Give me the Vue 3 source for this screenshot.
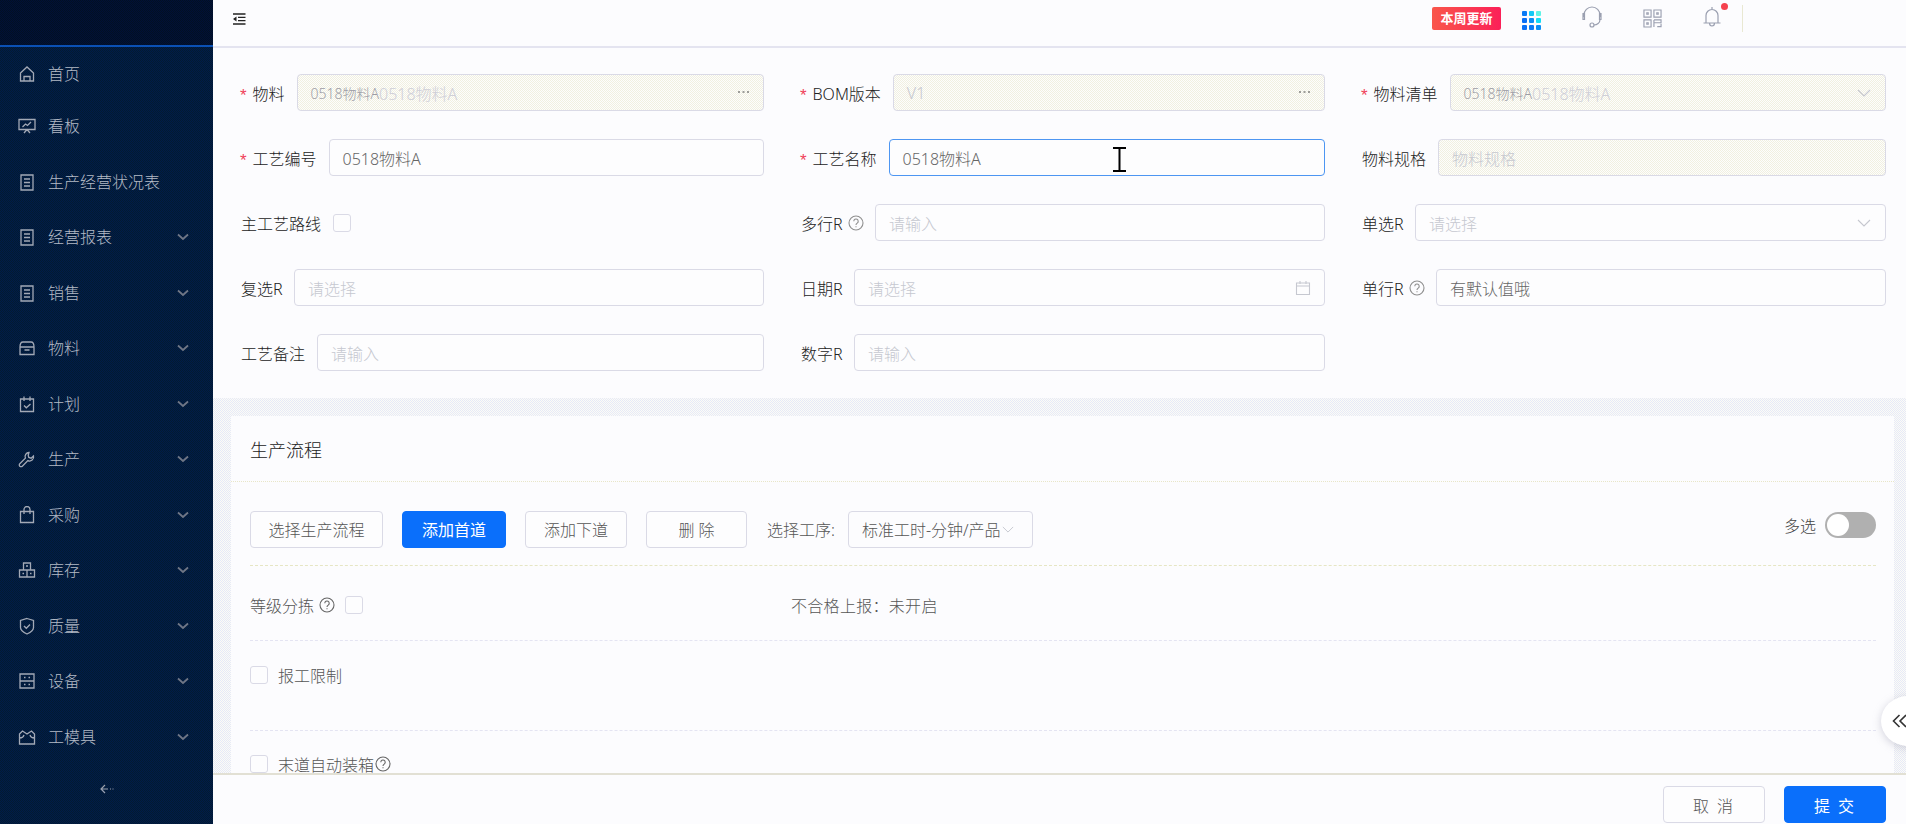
<script setup>
const menu = [
  { t: '首页', i: 'home' }, { t: '看板', i: 'board' }, { t: '生产经营状况表', i: 'doc' },
  { t: '经营报表', i: 'doc', c: 1 }, { t: '销售', i: 'doc', c: 1 }, { t: '物料', i: 'box', c: 1 },
  { t: '计划', i: 'plan', c: 1 }, { t: '生产', i: 'wrench', c: 1 }, { t: '采购', i: 'bag', c: 1 },
  { t: '库存', i: 'stock', c: 1 }, { t: '质量', i: 'shield', c: 1 }, { t: '设备', i: 'device', c: 1 },
  { t: '工模具', i: 'tool', c: 1 },
]
const icons = {
  home: 'M2.500 8 9 2l6.500 6v8h-13zM6 16v-4.500h6V16',
  board: 'M1 2.500h16v10H1zM4.500 10l3-3 2 1.500 3.500-3.500M6 16l3-3.500 3 3.500',
  doc: 'M3 2h12v15H3zM6 6h6M6 9.500h6M6 13h6',
  box: 'M2 8c0-3 1-5 3-5h8c2 0 3 2 3 5v7.500H2zM2 8h14M6.500 11h5',
  plan: 'M2.500 4h13v12.500h-13zM6 1.500V6M12 1.500V6M6 10.500l2.300 2.300L12.500 9',
  wrench: 'M11 2.500a4 4 0 0 0-3.600 5.600L1.800 13.700a1.700 1.700 0 0 0 2.500 2.500l5.600-5.600A4 4 0 0 0 15.500 6l-2.400 2.200-2.300-.8-.6-2.200z',
  bag: 'M2.500 5.500h13v11h-13zM6 8V3.500a3 3 0 0 1 6 0V8',
  stock: 'M5.500 2h7v7h-7zM1.500 9h7.500v7h-7.500zM9 9h7.500v7H9zM8 5h2M4.500 12.500h1.500M12 12.500h1.500',
  shield: 'M9 1.500l6.500 2v7c0 3-3 5-6.500 6.500-3.500-1.500-6.500-3.500-6.500-6.500v-7zM6 9l2.300 2.300L12 7.500',
  device: 'M2 2h14v14H2zM2 9h14M6 5.500h1.500M10.500 5.500H12M6 12.500h1.500M10.500 12.500H12',
  tool: 'M1.500 6l3-3 4.500 3 4.500-3 3 3v10h-15zM1.500 10c3 0 4-1 4.500-3M16.500 10c-3 0-4-1-4.500-3',
}
const dots = [
  ['#0a7af5', '#14c8f5', '#5ff3e6'], ['#0a6ff5', '#0a8ef5', '#14dcf5'], ['#0a6ff5', '#0a7af5', '#0a8ef5'],
]
</script>

<template>
  <div class="page">
    <aside class="side">
      <div class="logo"></div>
      <nav class="nav">
        <div v-for="m in menu" :key="m.t" class="item">
          <svg class="ico" viewBox="0 0 18 18"><path :d="icons[m.i]" /></svg>
          <span class="item-t">{{ m.t }}</span>
          <svg v-if="m.c" class="chev" viewBox="0 0 12 8"><path d="M1 1.500 6 6l5-4.500" /></svg>
        </div>
      </nav>
      <div class="side-foot">
        <svg viewBox="0 0 14 10" class="back"><path d="M5 1 1 5l4 4M1 5h7M10 5h1M12.500 5h1" /></svg>
      </div>
    </aside>

    <main class="main">
      <header class="top">
        <svg class="burger" viewBox="0 0 13 12"><path d="M0 1h12.500M5 4.300h7.500M5 7.600h7.500M0 11h12.500" /><path class="fill" d="M3.500 3.500v5L0 6z" /></svg>
        <div class="top-right">
          <span class="badge">本周更新</span>
          <div class="dots">
            <template v-for="(row, r) in dots" :key="r">
              <i v-for="(c, k) in row" :key="k" :style="{ background: c }"></i>
            </template>
          </div>
          <svg class="tico head" viewBox="0 0 22 22"><path d="M3 11V9a8 8 0 0 1 16 0v2M18.500 7.500h1.500v6h-1.500zM3.500 7.500H2v6h1.500zM19 13.500c0 3.500-3 5.500-6 5.500" /><circle cx="11" cy="19" r="2" /></svg>
          <svg class="tico qr" viewBox="0 0 20 20"><path d="M1 1h7.500v7.500H1zM11.500 1H19v7.500h-7.500zM1 11.500h7.500V19H1zM4 4h1.500v1.500H4zM14.500 4H16v1.500h-1.500zM4 14.500h1.500V16H4zM11.500 11.500H19v3h-7.500M11.500 11.500V19M15 18.500h4v-3" /></svg>
          <span class="bell-w">
            <svg class="tico bell" viewBox="0 0 18 22"><path d="M9 1v2.500M3 17V9.500a6 6 0 0 1 12 0V17M.5 17h17M6.500 17a2.500 3 0 0 0 5 0" /></svg>
            <b class="red"></b>
          </span>
          <span class="sep"></span>
        </div>
      </header>

      <div class="content">
        <section class="form">
          <div class="field"><label><em>*</em>物料</label><div class="ctl off"><span class="small">0518物料A</span><span class="ph2">0518物料A</span><svg class="more" viewBox="0 0 11 3"><path d="M0 1h2M4.500 1h2M9 1h2" /></svg></div></div>
          <div class="field"><label><em>*</em>BOM版本</label><div class="ctl off"><span class="ph">V1</span><svg class="more" viewBox="0 0 11 3"><path d="M0 1h2M4.500 1h2M9 1h2" /></svg></div></div>
          <div class="field"><label><em>*</em>物料清单</label><div class="ctl off"><span class="small">0518物料A</span><span class="ph2">0518物料A</span><svg class="arrow" viewBox="0 0 14 8"><path d="M1 1l6 6 6-6" /></svg></div></div>

          <div class="field"><label><em>*</em>工艺编号</label><div class="ctl"><span class="val">0518物料A</span></div></div>
          <div class="field"><label><em>*</em>工艺名称</label><div class="ctl focus"><span class="val">0518物料A</span></div></div>
          <div class="field"><label>物料规格</label><div class="ctl off"><span class="ph">物料规格</span></div></div>

          <div class="field"><label>主工艺路线</label><span class="check"></span></div>
          <div class="field"><label class="r">多行R<svg class="q" viewBox="0 0 16 16"><circle cx="8" cy="8" r="7" /><path d="M5.800 6.200a2.200 2.200 0 1 1 3.400 1.900c-.8.500-1.200 1-1.200 1.900M8 11.300v1" /></svg></label><div class="ctl"><span class="ph">请输入</span></div></div>
          <div class="field"><label class="r">单选R</label><div class="ctl"><span class="ph">请选择</span><svg class="arrow" viewBox="0 0 14 8"><path d="M1 1l6 6 6-6" /></svg></div></div>

          <div class="field"><label class="r">复选R</label><div class="ctl"><span class="ph">请选择</span></div></div>
          <div class="field"><label class="r">日期R</label><div class="ctl"><span class="ph">请选择</span><svg class="cal" viewBox="0 0 16 16"><path d="M1.500 3h13v11.500h-13zM1.500 6h13M5 1v3M11 1v3" /></svg></div></div>
          <div class="field"><label class="r">单行R<svg class="q" viewBox="0 0 16 16"><circle cx="8" cy="8" r="7" /><path d="M5.800 6.200a2.200 2.200 0 1 1 3.400 1.900c-.8.500-1.200 1-1.200 1.900M8 11.300v1" /></svg></label><div class="ctl"><span class="val">有默认值哦</span></div></div>

          <div class="field"><label>工艺备注</label><div class="ctl"><span class="ph">请输入</span></div></div>
          <div class="field"><label class="r">数字R</label><div class="ctl"><span class="ph">请输入</span></div></div>
        </section>

        <section class="band">
          <div class="card">
            <h3 class="title">生产流程</h3>
            <div class="tools">
              <button class="btn w1">选择生产流程</button>
              <button class="btn w2 pri">添加首道</button>
              <button class="btn w3">添加下道</button>
              <button class="btn w4">删 除</button>
              <span class="tl">选择工序:</span>
              <div class="sel">标准工时-分钟/产品<svg class="arrow sm" viewBox="0 0 14 8"><path d="M1 1l6 6 6-6" /></svg></div>
              <div class="multi">
                <span>多选</span>
                <span class="switch"><i></i></span>
              </div>
            </div>
            <div class="row r1">
              <span class="cell">等级分拣<svg class="q dark" viewBox="0 0 16 16"><circle cx="8" cy="8" r="7" /><path d="M5.800 6.200a2.200 2.200 0 1 1 3.400 1.900c-.8.500-1.200 1-1.200 1.900M8 11.300v1" /></svg><span class="check"></span></span>
              <span class="state">不合格上报：未开启</span>
            </div>
            <div class="row r2">
              <span class="cell"><span class="check"></span>报工限制</span>
            </div>
            <div class="row r3">
              <span class="cell"><span class="check"></span>末道自动装箱<svg class="q dark tight" viewBox="0 0 16 16"><circle cx="8" cy="8" r="7" /><path d="M5.800 6.200a2.200 2.200 0 1 1 3.400 1.900c-.8.500-1.200 1-1.200 1.900M8 11.300v1" /></svg></span>
            </div>
          </div>
        </section>
      </div>

      <footer class="foot">
        <button class="fbtn">取 消</button>
        <button class="fbtn blue">提 交</button>
      </footer>

      <div class="float">
        <svg viewBox="0 0 16 14"><path d="M7.500 1 1.500 7l6 6M14 1 8 7l6 6" /></svg>
      </div>
      <svg class="cursor" viewBox="0 0 15 25"><path d="M1 1h13M1 24h13M7.500 1v23" /></svg>
    </main>
  </div>
</template>

<style>
html, body { margin: 0; padding: 0; overflow: hidden; }
</style>

<style scoped>
.page {
  display: flex;
  width: 1906px;
  height: 824px;
  overflow: hidden;
  font-family: "Noto Sans", "Noto Sans CJK SC", sans-serif;
  font-size: 16px;
  font-weight: 300;
  color: #333;
  background: #fcfcfe;
}
.side {
  width: 213px;
  flex: none;
  display: flex;
  flex-direction: column;
  background: repeating-conic-gradient(#001c4a 0 25%, #031a30 0 50%) 0 0 / 2px 2px;
  color: #b4bac6;
}
.logo {
  height: 45px;
  flex: none;
  background: repeating-conic-gradient(#001038 0 25%, #021022 0 50%) 0 0 / 2px 2px;
  border-bottom: 2px solid #0a50b4;
}
.nav { flex: 1; padding-top: 1px; }
.item { height: 55.500px; display: flex; align-items: center; padding-left: 18px; }
.item:first-child { height: 50.500px; box-sizing: border-box; padding-top: 2px; }
.ico { width: 18px; height: 18px; flex: none; fill: none; stroke: #a3a9b6; stroke-width: 1.300; }
.item-t { margin-left: 12px; line-height: 1; }
.chev { width: 12px; height: 8px; margin-left: auto; margin-right: 24px; fill: none; stroke: #6f7686; stroke-width: 1.800; }
.side-foot { height: 40px; display: flex; justify-content: center; padding-top: 1px; }
.back { width: 14px; height: 10px; fill: none; stroke: #9aa0ae; stroke-width: 1.200; }

.main { position: relative; flex: 1; min-width: 0; display: flex; flex-direction: column; }
.top {
  height: 48px;
  flex: none;
  display: flex;
  align-items: flex-start;
  box-sizing: border-box;
  border-bottom: 2px solid #e4e4f0;
  padding-left: 20px;
}
.burger { width: 13px; height: 12px; margin-top: 13px; fill: none; stroke: #222; stroke-width: 1.300; }
.burger .fill { fill: #222; stroke: none; }
.top-right { margin-left: auto; display: flex; align-items: flex-start; padding-right: 163px; }
.badge {
  width: 69px;
  height: 23px;
  margin-top: 7px;
  border-radius: 2px;
  background: linear-gradient(90deg, #f9564a, #fb2058);
  color: #fff;
  font-size: 13px;
  font-weight: 700;
  line-height: 23px;
  text-align: center;
}
.dots {
  margin: 11px 0 0 21px;
  width: 19px;
  display: grid;
  grid-template-columns: repeat(3, 5px);
  gap: 2px;
}
.dots i { width: 5px; height: 5px; border-radius: 1px; }
.tico { fill: none; stroke: #9a9fb0; stroke-width: 1.200; flex: none; }
.head { width: 22px; height: 22px; margin: 6px 0 0 40px; }
.qr { width: 19px; height: 19px; margin: 9px 0 0 40px; }
.bell-w { position: relative; display: block; margin: 6px 0 0 41px; width: 18px; height: 22px; }
.bell { width: 18px; height: 22px; display: block; }
.red { position: absolute; left: 18px; top: -3px; width: 7px; height: 7px; border-radius: 50%; background: #f5414e; }
.sep { width: 1px; height: 27px; margin: 5px 0 0 21px; background: #e9e8d2; }

.content { flex: 1; min-height: 0; overflow: hidden; display: flex; flex-direction: column; }
.form {
  flex: none;
  height: 350px;
  box-sizing: border-box;
  padding: 26px 20px 0 27px;
  display: grid;
  grid-template-columns: 524px 525px 525px;
  grid-auto-rows: 37px;
  column-gap: 36px;
  row-gap: 28px;
}
.field { display: flex; align-items: center; min-width: 0; }
label { display: flex; align-items: center; flex: none; margin-right: 12px; color: #222; white-space: nowrap; margin-left: 1px; }
label.r { margin-right: 11.500px; }
em {
  display: block;
  font-style: normal;
  font-family: "Liberation Sans", sans-serif;
  color: #f0415a;
  width: 12.500px;
  margin-left: -1px;
  font-size: 17px;
  line-height: 1;
  padding-top: 5px;
}
.ctl {
  flex: 1;
  min-width: 0;
  height: 37px;
  box-sizing: border-box;
  display: flex;
  align-items: center;
  padding: 0 13px;
  border: 1px solid #dadae6;
  border-radius: 4px;
  background: #fdfdfe;
}
.ctl.off {
  background: repeating-conic-gradient(#f1f0e0 0 25%, #fdfdfd 0 50%) 0 0 / 2px 2px;
}
.ctl.focus { border-color: #4d96f2; }
.val { color: #666; }
.ph { color: #c6c8d0; }
.ph2 { color: #cfcfd8; }
.small { font-size: 14px; color: #9d9da6; }
.more { width: 11px; height: 3px; margin-left: auto; margin-right: 1px; fill: none; stroke: #444; stroke-width: 1.200; flex: none; }
.arrow { width: 14px; height: 8px; margin-left: auto; margin-right: 1px; fill: none; stroke: #c5c7cf; stroke-width: 1.100; flex: none; }
.arrow.sm { width: 12px; height: 7px; margin-left: 1px; margin-right: 0; }
.cal { width: 16px; height: 16px; margin-left: auto; fill: none; stroke: #c6c8d0; stroke-width: 1.100; flex: none; }
.check { width: 18px; height: 18px; box-sizing: border-box; border: 1px solid #dadae6; border-radius: 3px; flex: none; display: block; background: #fdfdfe; }
.q { width: 16px; height: 16px; margin-left: 5px; fill: none; stroke: #8f8f8f; stroke-width: 1.100; flex: none; }
.q.dark { stroke: #666; margin-left: 5px; }
.q.tight { margin-left: 1px; }

.band {
  flex: 1;
  min-height: 0;
  box-sizing: border-box;
  padding: 18px 12px 0 18px;
  background: repeating-conic-gradient(#e6e9f8 0 25%, #fcfcf6 0 50%) 0 0 / 2px 2px;
}
.card { height: 100%; box-sizing: border-box; background: #fcfcfe; padding: 0 18px 0 19px; overflow: hidden; }
.title { margin: 0 -18px 0 -19px; padding-left: 19px; height: 66px; box-sizing: border-box; font-size: 18px; font-weight: 300; line-height: 68px; color: #222; border-bottom: 1px dotted #e8e6c8; }
.tools { display: flex; align-items: center; height: 84px; box-sizing: border-box; gap: 20px; padding-top: 11px; border-bottom: 1px dashed #e6e6c4; }
.btn {
  height: 37px;
  padding: 0;
  box-sizing: border-box;
  font: inherit;
  color: #555;
  background: #fdfdfe;
  border: 1px solid #dadae6;
  border-radius: 4px;
  flex: none;
}
.w1 { width: 133px; }
.w2 { width: 104px; margin-left: -1px; }
.w3 { width: 102px; margin-left: -1px; }
.w4 { width: 101px; margin-left: -1px; }
.pri { background: #0a6ffb; border-color: #0a6ffb; color: #fff; font-weight: 400; }
.tl { color: #555; margin-right: -7px; }
.sel {
  height: 37px;
  width: 185px;
  box-sizing: border-box;
  padding-left: 13px;
  display: flex;
  align-items: center;
  border: 1px solid #dadae6;
  border-radius: 4px;
  color: #555;
  white-space: nowrap;
  flex: none;
}
.multi { margin-left: auto; margin-bottom: 8px; display: flex; align-items: center; gap: 9px; color: #444; }
.switch { width: 51px; height: 26px; border-radius: 13px; background: #b0b0b0; display: block; position: relative; }
.switch i { position: absolute; left: 2px; top: 2px; width: 22px; height: 22px; border-radius: 50%; background: #fff; }
.row { display: flex; align-items: center; box-sizing: border-box; border-bottom: 1px dashed #e4e4f2; color: #555; }
.r1 { height: 75px; padding-top: 4px; }
.r2 { height: 90px; padding-bottom: 21px; }
.r3 { height: 70px; border-bottom: 0; padding-bottom: 4px; }
.cell { display: flex; align-items: center; }
.cell > .check:first-child { margin-right: 10px; }
.cell > .q + .check { margin-left: 10px; }
.state { position: absolute; left: 578px; letter-spacing: .3px; }

.foot {
  flex: none;
  height: 51px;
  box-sizing: border-box;
  border-top: 2px solid #e2e0d4;
  background: #fcfcfe;
  display: flex;
  justify-content: flex-end;
  align-items: flex-start;
  gap: 19px;
  padding: 11px 20px 0 0;
}
.fbtn {
  width: 102px;
  height: 37px;
  box-sizing: border-box;
  font: inherit;
  color: #555;
  background: #fdfdfe;
  border: 1px solid #dadae6;
  border-radius: 4px;
  letter-spacing: 2px;
}
.fbtn.blue { background: #0a6ffb; border-color: #0a6ffb; color: #fff; font-weight: 400; }
.float {
  position: absolute;
  left: 1668px;
  top: 696px;
  width: 54px;
  height: 50px;
  border-radius: 50%;
  background: #fff;
  box-shadow: 0 2px 8px rgba(150, 150, 170, .4);
  display: flex;
  align-items: center;
  padding-left: 11px;
  box-sizing: border-box;
}
.float svg { width: 16px; height: 14px; fill: none; stroke: #333; stroke-width: 1.600; flex: none; }
.cursor { position: absolute; left: 899px; top: 147px; width: 15px; height: 25px; fill: none; stroke: #000; stroke-width: 2; }
</style>
